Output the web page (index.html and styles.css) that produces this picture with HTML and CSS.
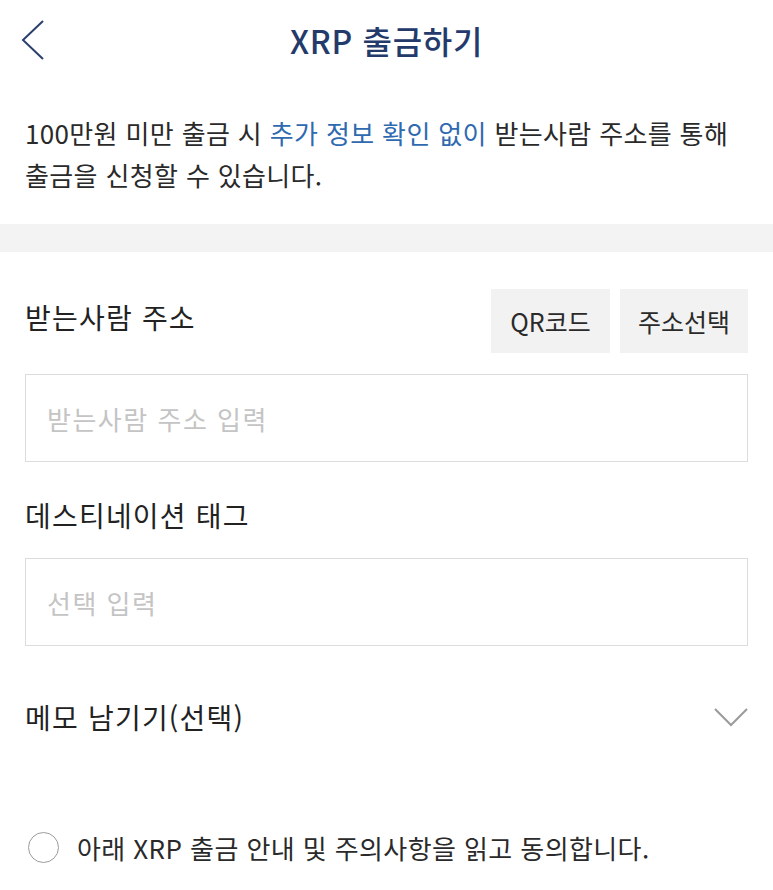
FILE: index.html
```html
<!DOCTYPE html>
<html lang="ko">
<head>
    <meta charset="UTF-8">
    <meta name="viewport" content="width=device-width, initial-scale=1.0">
    <title>XRP 출금하기</title>
    <link rel="stylesheet" href="styles.css">
</head>
<body>
    <header class="top-bar">
        <button class="back-btn" type="button" aria-label="뒤로">
            <svg width="30" height="44" viewBox="0 0 30 44">
                <polyline points="24,4 4,23 24,42" fill="none" stroke="#2b3f6e" stroke-width="2"/>
            </svg>
        </button>
        <h1>XRP 출금하기</h1>
        <span class="spacer"></span>
    </header>

    <p class="notice">
        100만원 미만 출금 시 <span class="accent">추가 정보 확인 없이</span> 받는사람 주소를 통해<br>
        출금을 신청할 수 있습니다.
    </p>

    <div class="divider"></div>

    <form class="withdraw-form">
        <div class="field-head">
            <label for="address">받는사람 주소</label>
            <div class="head-actions">
                <button type="button" class="chip">QR코드</button>
                <button type="button" class="chip">주소선택</button>
            </div>
        </div>
        <input type="text" id="address" class="text-input" placeholder="받는사람 주소 입력">

        <label for="tag" class="field-label">데스티네이션 태그</label>
        <input type="text" id="tag" class="text-input" placeholder="선택 입력">

        <div class="memo-toggle">
            <span>메모 남기기(선택)</span>
            <svg width="34" height="20" viewBox="0 0 34 20">
                <polyline points="1,2 17,18 33,2" fill="none" stroke="#9a9a9a" stroke-width="2"/>
            </svg>
        </div>

        <label class="agree">
            <span class="radio"></span>
            <span>아래 XRP 출금 안내 및 주의사항을 읽고 동의합니다.</span>
        </label>
    </form>
</body>
</html>
```

FILE: styles.css
```css
*,
*:before,
*:after {
    padding: 0;
    margin: 0;
    box-sizing: border-box;
}
body {
    background-color: #ffffff;
    font-family: 'Noto Sans CJK KR', 'Noto Sans', sans-serif;
    color: #2a2a2a;
    width: 773px;
}
.top-bar {
    display: grid;
    grid-template-columns: 70px 1fr 70px;
    align-items: center;
    height: 82px;
}
.back-btn {
    background: none;
    border: 0;
    padding-left: 19px;
    display: flex;
    align-items: center;
    height: 44px;
    margin-top: -4px;
}
.top-bar h1 {
    text-align: center;
    font-size: 32px;
    font-weight: 500;
    color: #233a6b;
    letter-spacing: 0.7px;
    margin-top: -2px;
}
.notice {
    height: 142px;
    padding: 30px 25px 0;
    font-size: 26px;
    line-height: 42px;
    letter-spacing: 0.35px;
    color: #2a2a2a;
}
.notice .accent {
    color: #2f6ab0;
}
.divider {
    height: 28px;
    background-color: #f3f3f3;
}
.withdraw-form {
    display: flex;
    flex-direction: column;
    padding: 37px 25px 0;
}
.field-head {
    display: flex;
    justify-content: space-between;
    align-items: center;
    height: 64px;
}
.field-head label {
    margin-top: -8px;
}
.field-head label,
.field-label,
.memo-toggle span {
    font-size: 28px;
    letter-spacing: 1.2px;
    color: #222222;
}
.head-actions {
    display: flex;
    gap: 10px;
}
.chip {
    height: 64px;
    border: 0;
    background-color: #f2f2f2;
    font-family: inherit;
    font-size: 25px;
    color: #2a2a2a;
}
.chip:first-child {
    width: 119px;
}
.chip:last-child {
    width: 128px;
}
.text-input {
    display: block;
    width: 100%;
    height: 88px;
    margin-top: 21px;
    border: 1px solid #dcdcdc;
    padding: 0 21px;
    font-family: inherit;
    font-size: 26px;
    letter-spacing: 1.5px;
    color: #222222;
    outline: none;
}
.text-input::placeholder {
    color: #c4c4c4;
}
.field-label {
    display: block;
    line-height: 40px;
    margin-top: 33px;
    margin-bottom: 2px;
}
.memo-toggle {
    display: flex;
    justify-content: space-between;
    align-items: center;
    height: 40px;
    margin-top: 51px;
}
.agree {
    display: flex;
    align-items: center;
    gap: 18px;
    height: 40px;
    margin-top: 90px;
    font-size: 26px;
    letter-spacing: 0.4px;
    color: #2a2a2a;
}
.radio {
    width: 31px;
    height: 31px;
    border: 1.5px solid #9c9c9c;
    border-radius: 50%;
    margin-left: 3px;
}
```
